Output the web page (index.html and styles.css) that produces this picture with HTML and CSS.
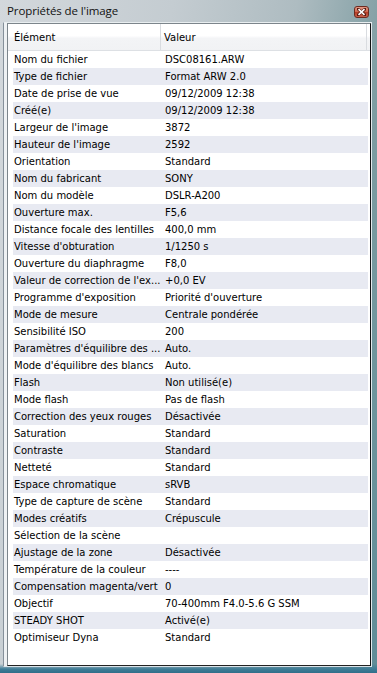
FILE: index.html
```html
<!DOCTYPE html>
<html lang="fr">
<head>
<meta charset="utf-8">
<title>Propriétés de l'image</title>
<link rel="stylesheet" href="styles.css">
</head>
<body>
<div class="frame">
  <div class="titlebar">
    <span class="title">Propriétés de l'image</span>
    <div class="close">
      <svg width="9" height="8" viewBox="0 0 9 8"><path d="M1 1 L8 7 M8 1 L1 7" stroke="#5a1c12" stroke-width="3" stroke-linecap="square"/><path d="M1.5 1.2 L7.5 6.8 M7.5 1.2 L1.5 6.8" stroke="#fff" stroke-width="1.6"/></svg>
    </div>
  </div>
  <div class="outer">
    <div class="panel">
      <div class="header">
        <div class="hcell hname">Élément</div>
        <div class="hcell hvalue">Valeur</div>
      </div>
      <div class="list">
        <div class="row"><span>Nom du fichier</span><span>DSC08161.ARW</span></div>
        <div class="row"><span>Type de fichier</span><span>Format ARW 2.0</span></div>
        <div class="row"><span>Date de prise de vue</span><span>09/12/2009 12:38</span></div>
        <div class="row"><span>Créé(e)</span><span>09/12/2009 12:38</span></div>
        <div class="row"><span>Largeur de l'image</span><span>3872</span></div>
        <div class="row"><span>Hauteur de l'image</span><span>2592</span></div>
        <div class="row"><span>Orientation</span><span>Standard</span></div>
        <div class="row"><span>Nom du fabricant</span><span>SONY</span></div>
        <div class="row"><span>Nom du modèle</span><span>DSLR-A200</span></div>
        <div class="row"><span>Ouverture max.</span><span>F5,6</span></div>
        <div class="row"><span>Distance focale des lentilles</span><span>400,0 mm</span></div>
        <div class="row"><span>Vitesse d'obturation</span><span>1/1250 s</span></div>
        <div class="row"><span>Ouverture du diaphragme</span><span>F8,0</span></div>
        <div class="row"><span>Valeur de correction de l'ex...</span><span>+0,0 EV</span></div>
        <div class="row"><span>Programme d'exposition</span><span>Priorité d'ouverture</span></div>
        <div class="row"><span>Mode de mesure</span><span>Centrale pondérée</span></div>
        <div class="row"><span>Sensibilité ISO</span><span>200</span></div>
        <div class="row"><span>Paramètres d'équilibre des ...</span><span>Auto.</span></div>
        <div class="row"><span>Mode d'équilibre des blancs</span><span>Auto.</span></div>
        <div class="row"><span>Flash</span><span>Non utilisé(e)</span></div>
        <div class="row"><span>Mode flash</span><span>Pas de flash</span></div>
        <div class="row"><span>Correction des yeux rouges</span><span>Désactivée</span></div>
        <div class="row"><span>Saturation</span><span>Standard</span></div>
        <div class="row"><span>Contraste</span><span>Standard</span></div>
        <div class="row"><span>Netteté</span><span>Standard</span></div>
        <div class="row"><span>Espace chromatique</span><span>sRVB</span></div>
        <div class="row"><span>Type de capture de scène</span><span>Standard</span></div>
        <div class="row"><span>Modes créatifs</span><span>Crépuscule</span></div>
        <div class="row"><span>Sélection de la scène</span><span></span></div>
        <div class="row"><span>Ajustage de la zone</span><span>Désactivée</span></div>
        <div class="row"><span>Température de la couleur</span><span>----</span></div>
        <div class="row"><span>Compensation magenta/vert</span><span>0</span></div>
        <div class="row"><span>Objectif</span><span>70-400mm F4.0-5.6 G SSM</span></div>
        <div class="row"><span>STEADY SHOT</span><span>Activé(e)</span></div>
        <div class="row"><span>Optimiseur Dyna</span><span>Standard</span></div>
      </div>
    </div>
  </div>
</div>
</body>
</html>
```
FILE: styles.css
```css
html, body {
  margin: 0;
  padding: 0;
}
body {
  width: 377px;
  height: 673px;
  overflow: hidden;
  font-family: "DejaVu Sans", Verdana, sans-serif;
}
.frame {
  box-sizing: border-box;
  width: 377px;
  height: 673px;
  padding: 0 5px 6px 3px;
  display: flex;
  flex-direction: column;
  background:
    linear-gradient(to bottom, rgba(0,0,0,0) 664px, #3f7c96 669px, #2f6f8a 673px),
    linear-gradient(100deg, #d3d8dc 0%, #c4ccd1 35%, #aebcc1 60%, #7d9ca1 80%, #5f8c97 100%);
}
.titlebar {
  height: 22px;
  flex: none;
  display: flex;
  align-items: center;
  justify-content: space-between;
  padding-left: 4px;
  margin-left: -3px;
  margin-right: -5px;
  padding-right: 8px;
  box-sizing: border-box;
}
.title {
  font-family: "Open Sans", "Noto Sans", sans-serif;
  font-size: 11.5px;
  color: #111;
  letter-spacing: -0.1px;
  padding-left: 3px;
  margin-top: -2px;
}
.close {
  width: 15px;
  height: 12px;
  box-sizing: border-box;
  border: 1px solid #6e2b20;
  border-radius: 3px;
  background: linear-gradient(to bottom, #e39a86 0%, #d06a52 45%, #b43f28 55%, #c9604a 100%);
  display: flex;
  align-items: center;
  justify-content: center;
  margin-top: 2px;
}
.close svg { display: block; }
.outer {
  flex: 1;
  display: flex;
  border-left: 1px solid #85909a;
  border-top: 1px solid #e9eef0;
  border-right: 1px solid #e4eaee;
  border-bottom: 1px solid #dbe3e8;
  padding-left: 3px;
  background: #eef1f3;
}
.panel {
  flex: 1;
  background: #fff;
  border-left: 1px solid #7c858b;
  border-top: 1px solid #7c858b;
  border-right: 1px solid #111;
  border-bottom: 1px solid #222;
  display: flex;
  flex-direction: column;
  font-size: 10px;
  color: #000;
}
.header {
  height: 26px;
  flex: none;
  display: grid;
  grid-template-columns: 153px 206px 1fr;
  border-bottom: 1px solid #dde0e4;
  background: linear-gradient(to bottom, #ffffff 0%, #ffffff 45%, #f3f4f6 55%, #f1f2f4 100%);
}
.hcell {
  display: flex;
  align-items: center;
  padding-top: 1px;
}
.hname {
  padding-left: 6px;
  border-right: 1px solid #d9dce0;
}
.hvalue {
  padding-left: 3px;
  border-right: 1px solid #d9dce0;
}
.list {
  padding: 0 2px 0 5px;
}
.row {
  display: grid;
  grid-template-columns: 148px 1fr;
  height: 17px;
  line-height: 17px;
  white-space: nowrap;
}
.row:nth-child(even) {
  background: #e8eaf2;
}
.row span:first-child {
  padding-left: 1px;
  overflow: hidden;
}
.row span:last-child {
  padding-left: 4px;
}
```
